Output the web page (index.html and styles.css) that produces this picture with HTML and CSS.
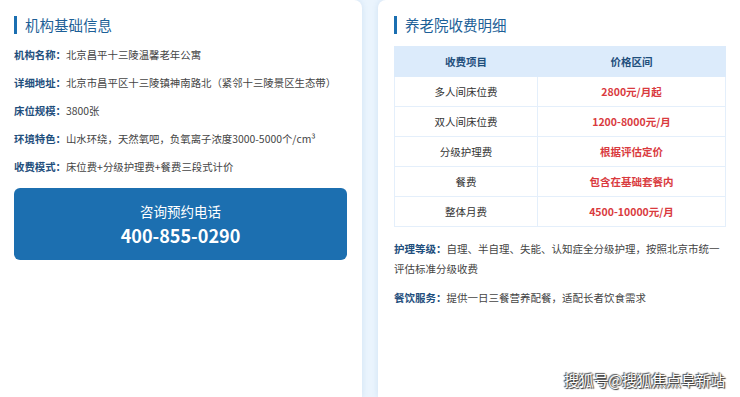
FILE: index.html
```html
<!DOCTYPE html>
<html lang="zh-CN">
<head>
<meta charset="utf-8">
<title>北京昌平十三陵温馨老年公寓</title>
<link rel="stylesheet" href="styles.css">
</head>
<body>
<div class="page">
  <section class="card card-left">
    <h2 class="title">机构基础信息</h2>
    <ul class="info">
      <li><b>机构名称：</b>北京昌平十三陵温馨老年公寓</li>
      <li><b>详细地址：</b>北京市昌平区十三陵镇神南路北（紧邻十三陵景区生态带）</li>
      <li><b>床位规模：</b>3800张</li>
      <li><b>环境特色：</b>山水环绕，天然氧吧，负氧离子浓度3000-5000个/cm³</li>
      <li><b>收费模式：</b>床位费+分级护理费+餐费三段式计价</li>
    </ul>
    <div class="phone">
      <div class="phone-label">咨询预约电话</div>
      <div class="phone-num">400-855-0290</div>
    </div>
  </section>
  <section class="card card-right">
    <h2 class="title">养老院收费明细</h2>
    <table class="fees">
      <thead>
        <tr><th class="c1">收费项目</th><th>价格区间</th></tr>
      </thead>
      <tbody>
        <tr><td>多人间床位费</td><td class="price">2800元/月起</td></tr>
        <tr><td>双人间床位费</td><td class="price">1200-8000元/月</td></tr>
        <tr><td>分级护理费</td><td class="price">根据评估定价</td></tr>
        <tr><td>餐费</td><td class="price">包含在基础套餐内</td></tr>
        <tr><td>整体月费</td><td class="price">4500-10000元/月</td></tr>
      </tbody>
    </table>
    <p class="note"><b>护理等级：</b>自理、半自理、失能、认知症全分级护理，按照北京市统一评估标准分级收费</p>
    <p class="note note2"><b>餐饮服务：</b>提供一日三餐营养配餐，适配长者饮食需求</p>
  </section>
  <div class="watermark">搜狐号@搜狐焦点阜新站</div>
</div>
</body>
</html>
```

FILE: styles.css
```css
html, body {
  margin: 0;
  padding: 0;
}
body {
  background: #eaf4fd;
  font-family: "Noto Sans CJK SC", "Noto Sans", sans-serif;
  color: #444;
  overflow: hidden;
  width: 740px;
  height: 397px;
}
.page {
  position: relative;
  display: flex;
  gap: 16px;
  height: 397px;
}
.card {
  background: #fff;
  box-shadow: 0 0 6px rgba(40, 110, 180, 0.14);
  height: 397px;
  box-sizing: border-box;
  padding-top: 16px;
}
.card-left {
  width: 362px;
  flex: none;
  border-radius: 0 8px 0 0;
  padding-left: 14px;
  padding-right: 15px;
}
.card-right {
  flex: 1;
  border-radius: 8px 0 0 0;
  padding-left: 16px;
}
.title {
  margin: 0;
  height: 18px;
  line-height: 18px;
  font-size: 14.5px;
  font-weight: 400;
  color: #1d5f97;
  border-left: 3px solid #1b6fb1;
  padding-left: 8px;
}
.info {
  list-style: none;
  margin: 7px 0 0;
  padding: 0;
}
.info li {
  height: 28px;
  line-height: 28px;
  font-size: 10.4px;
  color: #444;
  white-space: nowrap;
}
.info b, .note b {
  color: #1f4f7d;
  font-weight: 700;
}
.phone {
  margin-top: 7px;
  height: 72px;
  border-radius: 6px;
  background: #1c6fb0;
  color: #fff;
  display: flex;
  flex-direction: column;
  align-items: center;
  padding-top: 13px;
  box-sizing: border-box;
}
.phone-label {
  font-size: 13.5px;
  line-height: 20px;
}
.phone-num {
  font-size: 18px;
  font-weight: 700;
  line-height: 26px;
  margin-top: 1px;
}
.fees {
  margin-top: 12px;
  width: 332px;
  border-collapse: collapse;
  font-size: 10.5px;
  table-layout: fixed;
}
.fees th, .fees td {
  height: 30px;
  padding: 0;
  text-align: center;
  border: 1px solid #e4effb;
  box-sizing: border-box;
}
.fees th {
  background: #dcebfb;
  color: #1f4f7d;
  font-weight: 700;
  border-color: #dcebfb;
}
.fees .c1 {
  width: 143px;
}
.fees td {
  color: #333;
}
.fees td.price {
  color: #d93a3e;
  font-weight: 700;
}
.note {
  margin: 12px 0 0;
  width: 332px;
  font-size: 10.5px;
  line-height: 20px;
  color: #444;
}
.note2 {
  margin-top: 9px;
}
.watermark {
  position: absolute;
  right: 15px;
  bottom: 7px;
  font-size: 15px;
  line-height: 20px;
  color: #fff;
  letter-spacing: -0.3px;
  text-shadow: 0 0 1px #333, 1px 1px 1px #333, -1px -1px 1px #555;
}
```
